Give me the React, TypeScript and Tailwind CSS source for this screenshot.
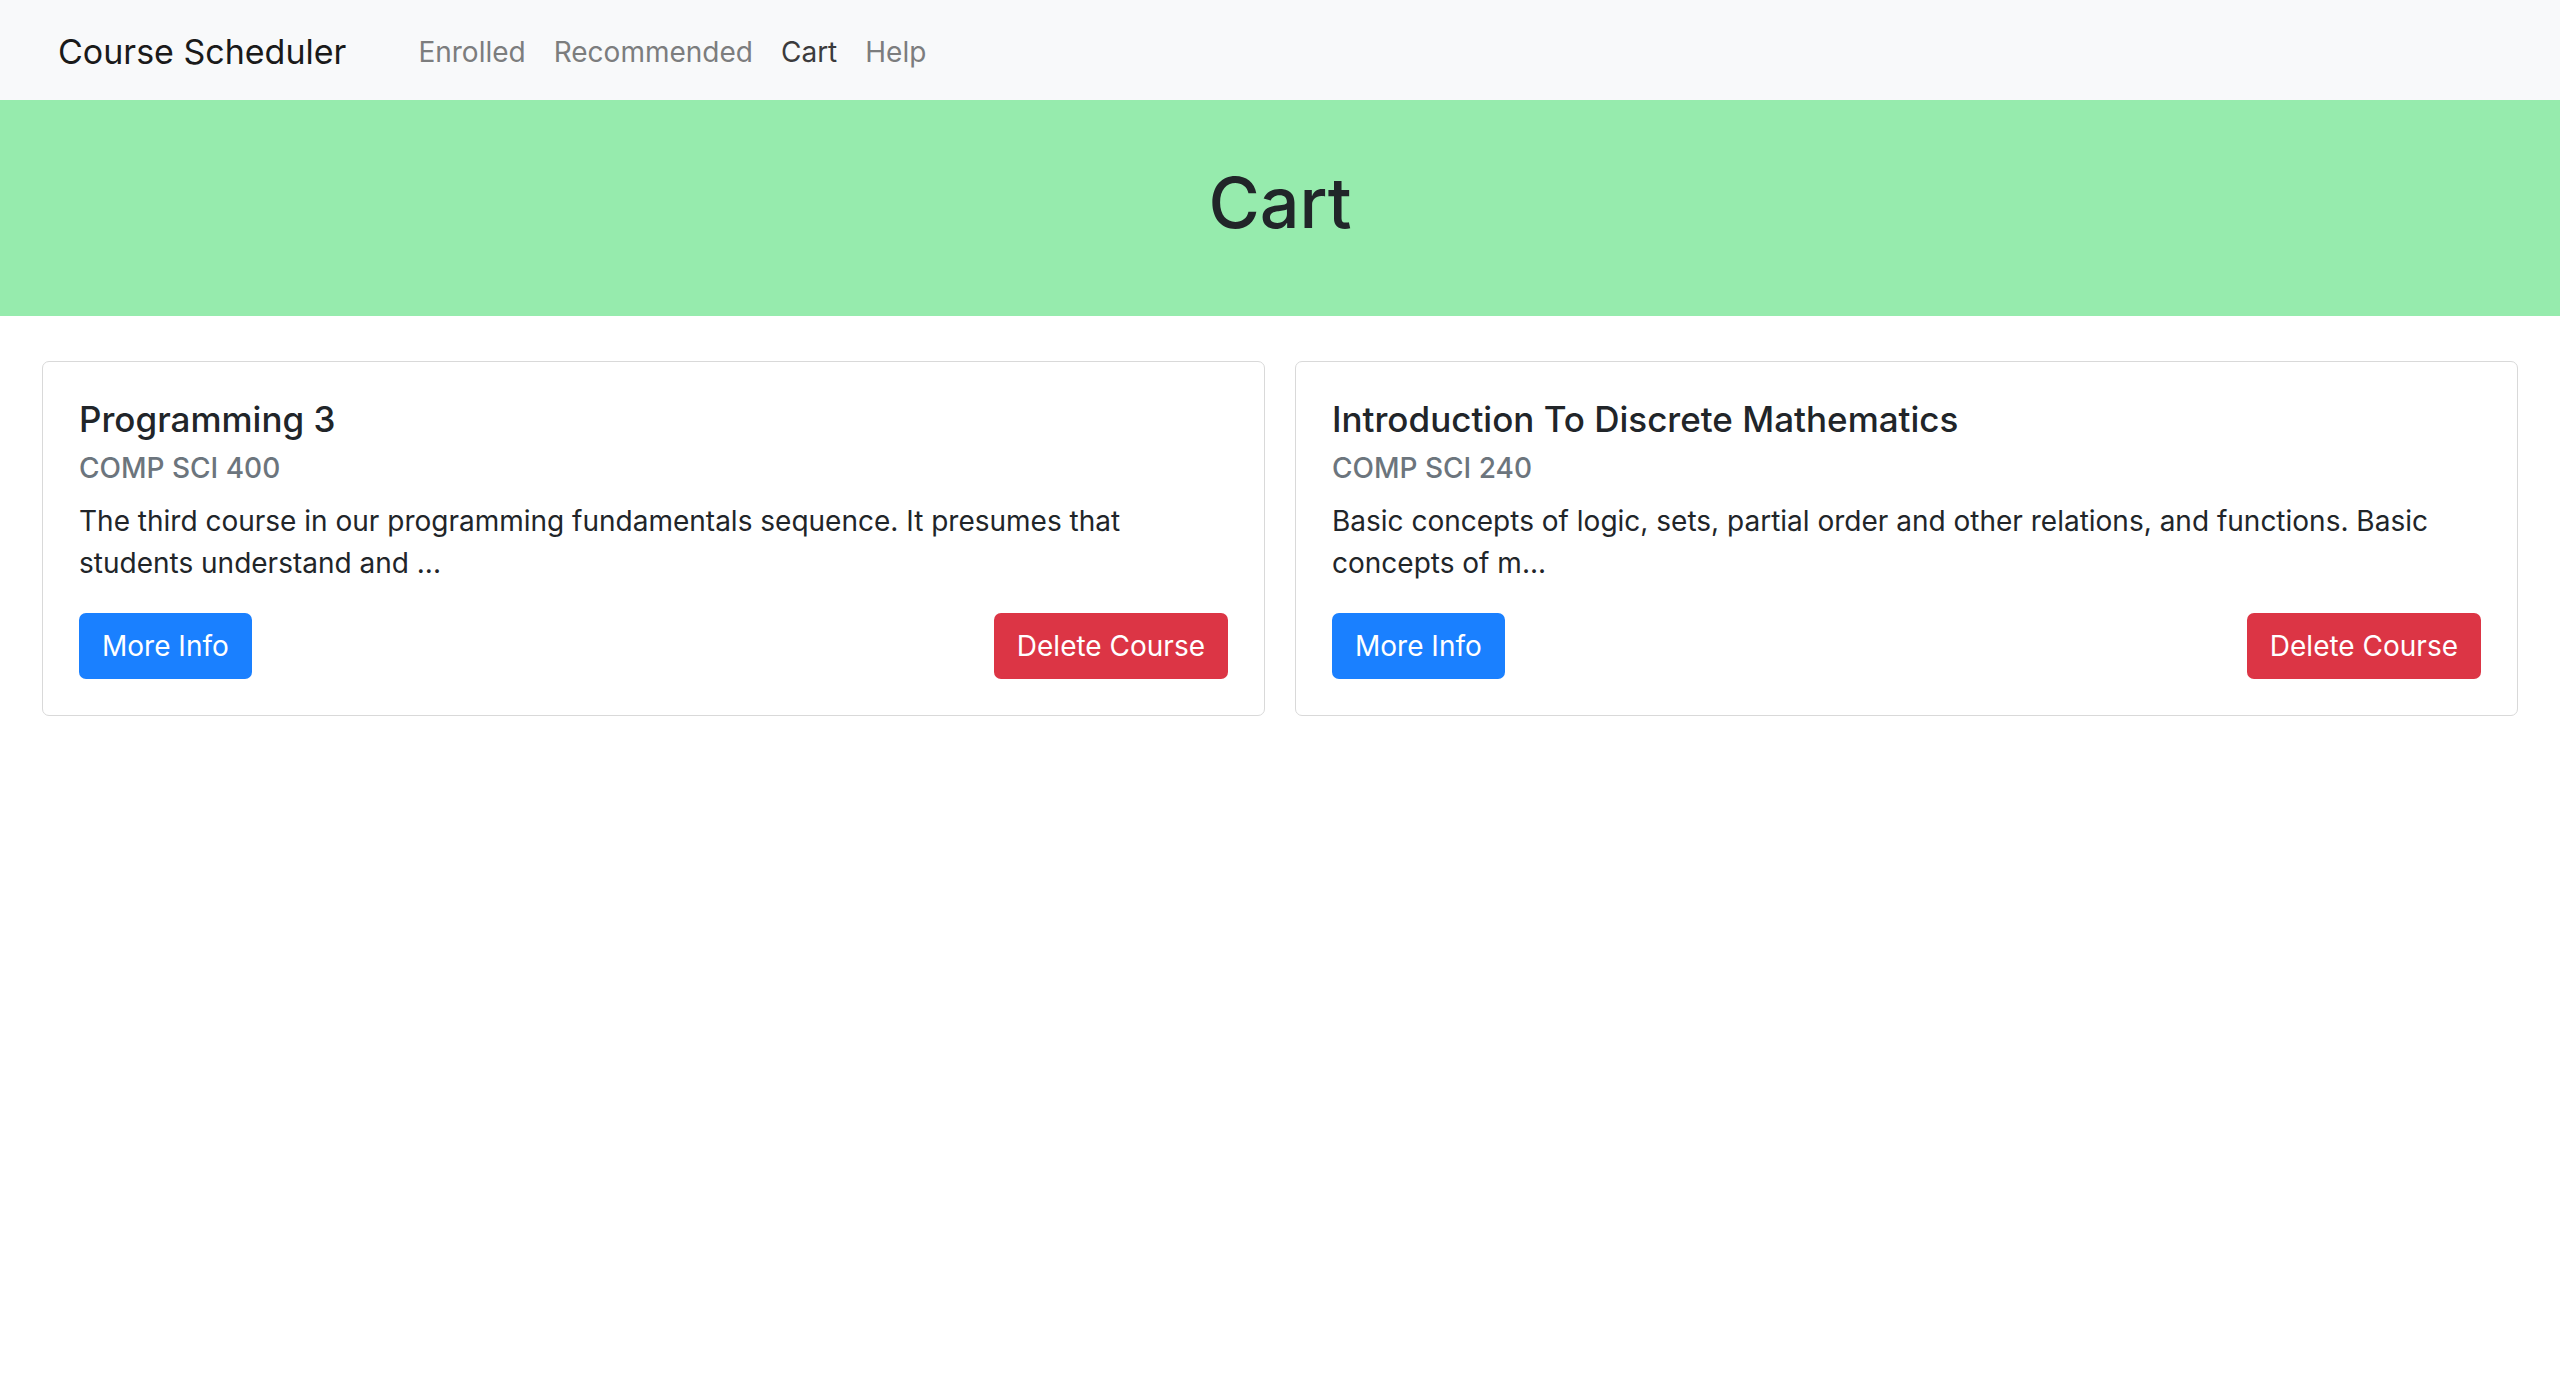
import React from 'react';

type Course = {
  name: string;
  number: string;
  description: string;
};

const cart: Course[] = [
  {
    name: 'Programming 3',
    number: 'COMP SCI 400',
    description:
      'The third course in our programming fundamentals sequence. It presumes that students understand and ...',
  },
  {
    name: 'Introduction To Discrete Mathematics',
    number: 'COMP SCI 240',
    description:
      'Basic concepts of logic, sets, partial order and other relations, and functions. Basic concepts of m...',
  },
];

const links = ['Enrolled', 'Recommended', 'Cart', 'Help'];

function NavBar() {
  return (
    <nav className="flex h-[100px] items-center bg-[#f8f9fa] pl-[58px] pt-[3px]">
      <span className="mr-[72px] text-[34px] leading-[52px] text-[#1a1a1a]">
        Course Scheduler
      </span>
      <ul className="flex items-center gap-[28px]">
        {links.map((link) => (
          <li
            key={link}
            className={
              link === 'Cart'
                ? 'text-[28px] leading-[42px] text-[#3b3b3c]'
                : 'text-[28px] leading-[42px] text-[#7c7d7e]'
            }>
            {link}
          </li>
        ))}
      </ul>
    </nav>
  );
}

function CourseCard({ course }: { course: Course }) {
  return (
    <div className="rounded-[7px] border border-[#d9d9d9] bg-white p-[36px]">
      <h5 className="mb-[11px] text-[35px] font-medium leading-[42px] text-[#212529]">
        {course.name}
      </h5>
      <h6 className="text-[28px] font-medium leading-[34px] text-[#6c757d]">
        {course.number}
      </h6>
      <p className="mt-[15px] text-[28px] leading-[42px] text-[#212529]">
        {course.description}
      </p>
      <div className="mt-[29px] flex items-center justify-between">
        <button className="h-[66px] rounded-[7px] bg-[#1a80ff] px-[23px] text-[28px] leading-[42px] text-white">
          More Info
        </button>
        <button className="h-[66px] rounded-[7px] bg-[#dc3545] px-[23px] text-[28px] leading-[42px] text-white">
          Delete Course
        </button>
      </div>
    </div>
  );
}

export default function App() {
  return (
    <div
      className="min-h-screen bg-white"
      style={{ fontFamily: 'Inter, "Open Sans", sans-serif' }}>
      <NavBar />
      <div className="flex h-[216px] items-center justify-center bg-[#96ebad] pb-[10px]">
        <h1 className="text-[70px] font-medium leading-[84px] text-[#212529]">
          Cart
        </h1>
      </div>
      <div className="mt-[45px] grid grid-cols-2 gap-[30px] px-[42px]">
        {cart.map((course) => (
          <CourseCard key={course.number} course={course} />
        ))}
      </div>
    </div>
  );
}
